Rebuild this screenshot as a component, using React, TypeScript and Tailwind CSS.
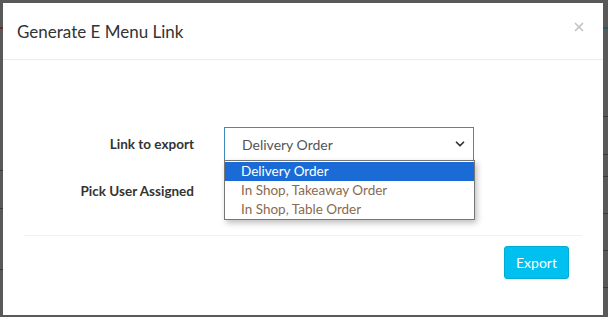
import { ChevronDown, X } from "lucide-react";

const options = ["Delivery Order", "In Shop, Takeaway Order", "In Shop, Table Order"];

export default function App() {
  return (
    <div
      className="relative w-[608px] h-[317px] overflow-hidden bg-[#595959] p-[3px] pr-[5px] pb-[2px]"
      style={{ fontFamily: '"Source Sans Pro", Lato, "Liberation Sans", sans-serif' }}
    >
      {/* faint page behind the overlay */}
      <div className="absolute left-0 top-[27px] h-[2px] w-[3px] bg-[#6b2b2b]" />
      <div className="absolute right-0 top-[27px] h-[2px] w-[5px] bg-[#1f5d66]" />
      <div className="absolute left-0 top-[170px] h-px w-[3px] bg-[#3a3a3a]" />
      <div className="absolute left-0 top-[208px] h-px w-[3px] bg-[#3a3a3a]" />
      <div className="absolute left-0 top-[269px] h-px w-[3px] bg-[#3a3a3a]" />
      <div className="absolute right-0 top-[116px] h-px w-[5px] bg-[#3a3a3a]" />
      <div className="absolute right-0 top-[154px] h-px w-[5px] bg-[#3a3a3a]" />
      <div className="absolute right-0 top-[176px] h-px w-[5px] bg-[#3a3a3a]" />
      <div className="absolute right-0 top-[213px] h-px w-[5px] bg-[#3a3a3a]" />
      <div className="absolute right-0 top-[250px] h-px w-[5px] bg-[#3a3a3a]" />
      <div className="absolute right-0 top-[287px] h-px w-[5px] bg-[#3a3a3a]" />

      <div className="relative flex h-full flex-col bg-white">
        <div className="flex h-[57px] items-center justify-between border-b border-[#ececec] pl-[14px] pr-[17px]">
          <h4 className="text-[17px] text-[#333] pt-[1px]">Generate E Menu Link</h4>
          <X className="mb-[8px] h-[14px] w-[14px] text-[#c4c4c4]" strokeWidth={3} />
        </div>

        <div className="flex flex-col gap-[20px] pt-[67px]">
          <div className="flex items-center">
            <label className="w-[191px] text-right text-[13.5px] font-bold text-[#333]">Link to export</label>
            <div className="relative ml-[30px]">
              <div className="flex h-[34px] w-[250px] items-center justify-between border border-[#3c8dbc] bg-white pl-[17px] pr-[6px] text-[14px] text-[#555]">
                <span>Delivery Order</span>
                <ChevronDown className="h-[14px] w-[14px] text-[#333]" strokeWidth={3} />
              </div>
              <div className="absolute left-0 top-[33px] z-10 w-[251px] border border-[#767676] bg-white pt-px shadow-[2px_3px_6px_rgba(0,0,0,0.25)]">
                {options.map((o, i) => (
                  <div
                    key={o}
                    className={`h-[19px] pl-[16px] text-[13.5px] leading-[19px] ${
                      i === 0 ? "bg-[#1a6bd6] text-white" : "text-[#8a6a50]"
                    }`}
                  >
                    {o}
                  </div>
                ))}
              </div>
            </div>
          </div>
          <div className="flex items-center">
            <label className="w-[191px] text-right text-[13.5px] font-bold text-[#333]">Pick User Assigned</label>
          </div>
        </div>

        <div className="mx-[21px] mt-[34px] flex justify-end border-t border-[#f0f0f0] pt-[10px] pr-[13px]">
          <button className="h-[33px] w-[65px] rounded-[3px] border border-[#00acd6] bg-[#00c0ef] text-[14px] text-white">
            Export
          </button>
        </div>
      </div>
    </div>
  );
}
